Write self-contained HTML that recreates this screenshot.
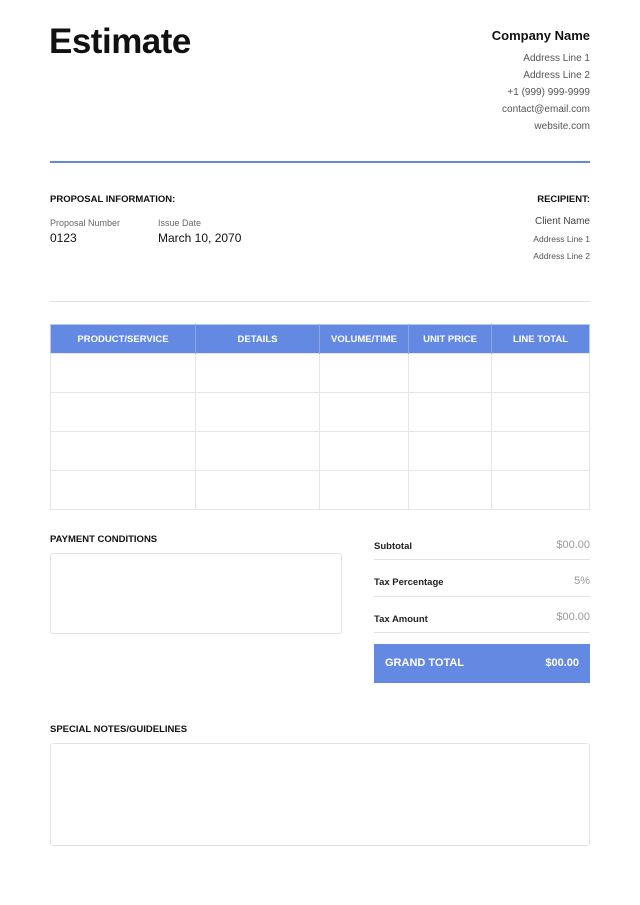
<!DOCTYPE html>
<html><head><style>
*{margin:0;padding:0;box-sizing:border-box}
body{width:640px;height:905px;background:#fff;font-family:"Liberation Sans",sans-serif;position:relative;color:#111;overflow:hidden}
.a{position:absolute;white-space:nowrap}
.r{text-align:right;right:50px}
.g{color:#555;font-size:10px}
.bl{background:#6489e2}
.h{font-weight:bold;font-size:9.5px}
</style></head><body>
<div class="a" style="left:49px;top:22px;font-size:35px;font-weight:bold;letter-spacing:-0.5px">Estimate</div>
<div class="a r" style="top:28px;font-size:13px;font-weight:bold">Company Name</div>
<div class="a r g" style="top:53px">Address Line 1</div>
<div class="a r g" style="top:70px">Address Line 2</div>
<div class="a r g" style="top:87px">+1 (999) 999-9999</div>
<div class="a r g" style="top:104px">contact@email.com</div>
<div class="a r g" style="top:121px">website.com</div>
<div class="a bl" style="left:50px;top:161px;width:540px;height:2px"></div>
<div class="a h" style="left:50px;top:194px">PROPOSAL INFORMATION:</div>
<div class="a r h" style="top:194px">RECIPIENT:</div>
<div class="a" style="left:50px;top:218px;font-size:9px;color:#666">Proposal Number</div>
<div class="a" style="left:158px;top:218px;font-size:9px;color:#666">Issue Date</div>
<div class="a" style="left:50px;top:231px;font-size:12px">0123</div>
<div class="a" style="left:158px;top:231px;font-size:12px">March 10, 2070</div>
<div class="a r" style="top:216px;font-size:10px;color:#444">Client Name</div>
<div class="a r" style="top:234px;font-size:8.5px;color:#555">Address Line 1</div>
<div class="a r" style="top:251px;font-size:8.5px;color:#555">Address Line 2</div>
<div class="a" style="left:50px;top:301px;width:540px;height:1px;background:#e3e3e3"></div>
<table class="a" style="left:50px;top:324px;width:540px;border-collapse:collapse;border:1px solid #b9c9ee">
<tr class="bl" style="height:29px;color:#fff;font-size:9.5px;font-weight:bold;text-align:center">
<td style="width:145px;border-right:1px solid #8aa6ea">PRODUCT/SERVICE</td><td style="width:124px;border-right:1px solid #8aa6ea">DETAILS</td><td style="width:89px;border-right:1px solid #8aa6ea">VOLUME/TIME</td><td style="width:83px;border-right:1px solid #8aa6ea">UNIT PRICE</td><td>LINE TOTAL</td></tr>
<tr style="height:39px"><td style="border:1px solid #e4e6ea"></td><td style="border:1px solid #e4e6ea"></td><td style="border:1px solid #e4e6ea"></td><td style="border:1px solid #e4e6ea"></td><td style="border:1px solid #e4e6ea"></td></tr>
<tr style="height:39px"><td style="border:1px solid #e4e6ea"></td><td style="border:1px solid #e4e6ea"></td><td style="border:1px solid #e4e6ea"></td><td style="border:1px solid #e4e6ea"></td><td style="border:1px solid #e4e6ea"></td></tr>
<tr style="height:39px"><td style="border:1px solid #e4e6ea"></td><td style="border:1px solid #e4e6ea"></td><td style="border:1px solid #e4e6ea"></td><td style="border:1px solid #e4e6ea"></td><td style="border:1px solid #e4e6ea"></td></tr>
<tr style="height:39px"><td style="border:1px solid #e4e6ea"></td><td style="border:1px solid #e4e6ea"></td><td style="border:1px solid #e4e6ea"></td><td style="border:1px solid #e4e6ea"></td><td style="border:1px solid #e4e6ea"></td></tr>
</table>
<div class="a h" style="left:50px;top:534px">PAYMENT CONDITIONS</div>
<div class="a" style="left:50px;top:553px;width:292px;height:81px;border:1px solid #e3e3e3;border-radius:3px"></div>
<div class="a" style="left:374px;top:541px;font-size:9.5px;font-weight:bold;color:#222">Subtotal</div>
<div class="a r" style="top:539px;font-size:11px;color:#999">$00.00</div>
<div class="a" style="left:374px;top:559px;width:216px;height:1px;background:#e3e3e3"></div>
<div class="a" style="left:374px;top:577px;font-size:9.5px;font-weight:bold;color:#222">Tax Percentage</div>
<div class="a r" style="top:575px;font-size:11px;color:#999">5%</div>
<div class="a" style="left:374px;top:596px;width:216px;height:1px;background:#e3e3e3"></div>
<div class="a" style="left:374px;top:614px;font-size:9.5px;font-weight:bold;color:#222">Tax Amount</div>
<div class="a r" style="top:611px;font-size:11px;color:#999">$00.00</div>
<div class="a" style="left:374px;top:632px;width:216px;height:1px;background:#e3e3e3"></div>
<div class="a bl" style="left:374px;top:644px;width:216px;height:39px"></div>
<div class="a" style="left:385px;top:657px;font-size:11px;font-weight:bold;color:#fff">GRAND TOTAL</div>
<div class="a" style="right:61px;top:657px;font-size:11px;font-weight:bold;color:#fff">$00.00</div>
<div class="a h" style="left:50px;top:724px">SPECIAL NOTES/GUIDELINES</div>
<div class="a" style="left:50px;top:743px;width:540px;height:103px;border:1px solid #e3e3e3;border-radius:3px"></div>
</body></html>
